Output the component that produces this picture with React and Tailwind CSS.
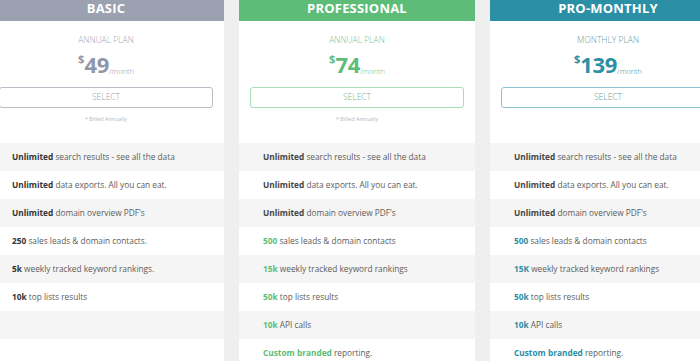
import React from "react";

const plans = [
  {
    name: "BASIC",
    plan: "ANNUAL PLAN",
    price: "49",
    billed: true,
    head: "bg-[#9ca1b1]",
    price_c: "text-[#8f96aa]",
    btn: "border-[#b9bdc7] text-[#9ba0ad]",
    plan_c: "text-[#a3a8b4]",
    hi: "text-[#333]",
    features: [
      ["Unlimited", " search results - see all the data"],
      ["Unlimited", " data exports. All you can eat."],
      ["Unlimited", " domain overview PDF's"],
      ["250", " sales leads & domain contacts."],
      ["5k", " weekly tracked keyword rankings."],
      ["10k", " top lists results"],
      null,
      null,
    ],
  },
  {
    name: "PROFESSIONAL",
    plan: "ANNUAL PLAN",
    price: "74",
    billed: true,
    head: "bg-[#5dbd78]",
    price_c: "text-[#5dbd78]",
    btn: "border-[#a9dcb7] text-[#79b68c]",
    plan_c: "text-[#7fbf93]",
    hi: "text-[#5dbd78]",
    features: [
      ["Unlimited", " search results - see all the data", true],
      ["Unlimited", " data exports. All you can eat.", true],
      ["Unlimited", " domain overview PDF's", true],
      ["500", " sales leads & domain contacts"],
      ["15k", " weekly tracked keyword rankings"],
      ["50k", " top lists results"],
      ["10k", " API calls"],
      ["Custom branded", " reporting."],
    ],
  },
  {
    name: "PRO-MONTHLY",
    plan: "MONTHLY PLAN",
    price: "139",
    billed: false,
    head: "bg-[#2b8fa6]",
    price_c: "text-[#2b8fa6]",
    btn: "border-[#8ec3cf] text-[#6a98a4]",
    plan_c: "text-[#6f9aa6]",
    hi: "text-[#2b8fa6]",
    features: [
      ["Unlimited", " search results - see all the data", true],
      ["Unlimited", " data exports. All you can eat.", true],
      ["Unlimited", " domain overview PDF's", true],
      ["500", " sales leads & domain contacts"],
      ["15K", " weekly tracked keyword rankings"],
      ["50k", " top lists results"],
      ["10k", " API calls"],
      ["Custom branded", " reporting."],
    ],
  },
];

function PlanCard({ p }) {
  return (
    <div className="w-[236px] shrink-0 bg-white">
      {/* header */}
      <div className={`h-[21px] ${p.head} flex items-start justify-center`}>
        <span className="text-white font-bold text-[13px] leading-[16px] tracking-[0.2px]">{p.name}</span>
      </div>

      <div className="h-[122px] flex flex-col items-center px-[11px]">
        <div className={`mt-[13px] text-[8.5px] leading-[12px] font-light ${p.plan_c}`}>{p.plan}</div>
        <div className={`mt-[6px] flex items-start h-[24px] ${p.price_c}`}>
          <span className="text-[11px] font-bold leading-[12px] mt-[1px]">$</span>
          <span className="text-[22px] font-bold leading-[24px] tracking-[-0.3px]">{p.price}</span>
          <span className="text-[7.5px] leading-[8px] mt-[15px] font-light">/month</span>
        </div>
        <button className={`mt-[11px] w-full h-[21px] border rounded-[3px] bg-white text-[8.5px] font-light ${p.btn}`}>
          SELECT
        </button>
        {p.billed && (
          <div className="mt-[7px] text-[5.5px] leading-[8px] text-[#b5b8bf]">* Billed Annually</div>
        )}
      </div>

      {p.features.map((f, i) => (
        <div
          key={i}
          className={`h-[28px] flex items-center pl-[24px] text-[8.3px] text-[#5c5c5c] ${i % 2 === 0 ? "bg-[#f5f5f5]" : "bg-white"}`}
        >
          {f && (
            <span>
              <b className={`font-bold ${f[2] ? "text-[#444]" : p.hi}`}>{f[0]}</b>
              {f[1]}
            </span>
          )}
        </div>
      ))}
    </div>
  );
}

export default function App() {
  return (
    <div
      className="w-[700px] h-[361px] overflow-hidden bg-[#efefef]"
      style={{ fontFamily: '"Open Sans", "Liberation Sans", sans-serif' }}
    >
      <div className="flex gap-[15px] -ml-[12px]">
        {plans.map((p) => (
          <PlanCard key={p.name} p={p} />
        ))}
      </div>
    </div>
  );
}
